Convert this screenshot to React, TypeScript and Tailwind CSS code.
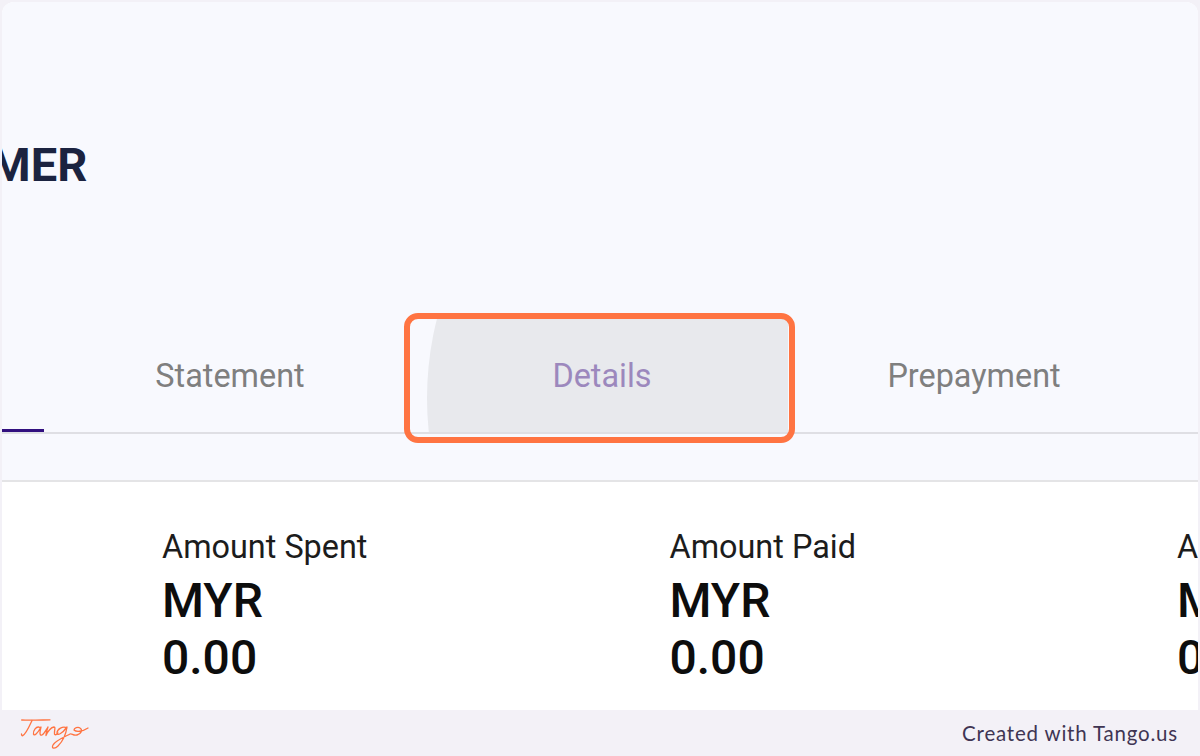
const roboto = "font-['Roboto',sans-serif]";

function StatBlock({ label, width }: { label: string; width: string }) {
  return (
    <div className={`${width} shrink-0 flex flex-col`}>
      <span className="text-[32.4px] leading-[38px] text-[#1c1c1c] whitespace-nowrap">{label}</span>
      <span className="mt-[8px] text-[48px] leading-[54px] font-medium text-[#0d0d0d] whitespace-nowrap">MYR</span>
      <span className="mt-[3px] text-[48px] leading-[54px] font-medium text-[#0d0d0d] whitespace-nowrap">0.00</span>
    </div>
  );
}

// Tango wordmark, a single hand-drawn script stroke
function TangoLogo() {
  return (
    <svg width="70" height="32" viewBox="0 0 70 32" fill="none" stroke="#ff7442" strokeWidth="1.3" strokeLinecap="round" strokeLinejoin="round">
      <path d="M1.700 1C10 1.500 20 1 30 0.800" />
      <path d="M12 1.500C9 8 6 15 2.700 16.700C2 17 1.500 16 1.500 15" />
      <path d="M20 8.500C16 6.500 13 12 13.500 15C14 17.500 18 14 21 8C20 12 19 17 22 16C24 15 26 11 28 8C27 11 26 14 26 16.500C28 12 31 8.500 34 8C36 8 34 12 34.500 15C35 16.500 37 15.500 38 14" />
      <path d="M47 9C43 6.500 37 10 37 14C37 17 42 15 47 8C46 15 43 22 38 27C35 30 31 30 33 26C35 22 42 19 50 15C52 14 53 17 57 16C61 15 63 11 60 9C58 7.500 54 9 54 11C56 13 62 13 68 9" />
    </svg>
  );
}

export default function App() {
  return (
    <div className={`w-[1200px] h-[756px] bg-[#f3f1f7] flex flex-col overflow-hidden relative ${roboto}`}>
      {/* captured page */}
      <div className="flex-1 min-h-0 mt-[2px] mx-[2px] rounded-t-[12px] overflow-hidden bg-white flex flex-col">
        <div className="h-[480px] shrink-0 bg-[#f8f9fe] border-b-2 border-[#e4e4e6] flex flex-col">
          <div className="pt-[133px] h-[316px] shrink-0 overflow-hidden">
            <h1 className="ml-[-164px] text-[47px] leading-[60px] font-bold text-[#1b2340] whitespace-nowrap">CUSTOMER</h1>
          </div>
          <div className="h-[116px] shrink-0 flex border-b-2 border-[#dfdfe4]">
            <div className="w-[42px] shrink-0 relative">
              <div className="absolute left-0 right-0 bottom-0 h-[3px] bg-[#32107f]" />
            </div>
            <div className="w-[372px] shrink-0 flex items-center justify-center pt-[2px] text-[32.4px] text-[#7f7f7f]">
              Statement
            </div>
            <div className="w-[372px] shrink-0 flex items-center justify-center pt-[2px] text-[32.4px] text-[#9c88bd] relative overflow-hidden">
              <div className="absolute left-[11px] top-[-240px] w-[640px] h-[640px] rounded-full bg-[#e8e9ed]" />
              <span className="relative">Details</span>
            </div>
            <div className="w-[372px] shrink-0 flex items-center justify-center pt-[2px] text-[32.4px] text-[#7f7f7f]">
              Prepayment
            </div>
          </div>
        </div>
        <div className="flex pt-[46px] pl-[160px]">
          <StatBlock label="Amount Spent" width="w-[507.5px]" />
          <StatBlock label="Amount Paid" width="w-[507.5px]" />
          <StatBlock label="Amount Due" width="w-[200px]" />
        </div>
      </div>
      {/* footer */}
      <div className="h-[46px] shrink-0 flex items-center justify-between pl-[20px] pr-[22px]">
        <div className="mt-[3px]"><TangoLogo /></div>
        <span className="font-['Lato',sans-serif] text-[20.5px] tracking-[0.8px] text-[#3f3553]">Created with Tango.us</span>
      </div>
      {/* highlight */}
      <div className="absolute left-[404px] top-[313px] w-[391px] h-[130px] rounded-[14px] border-[6px] border-[#ff7442]" />
    </div>
  );
}
